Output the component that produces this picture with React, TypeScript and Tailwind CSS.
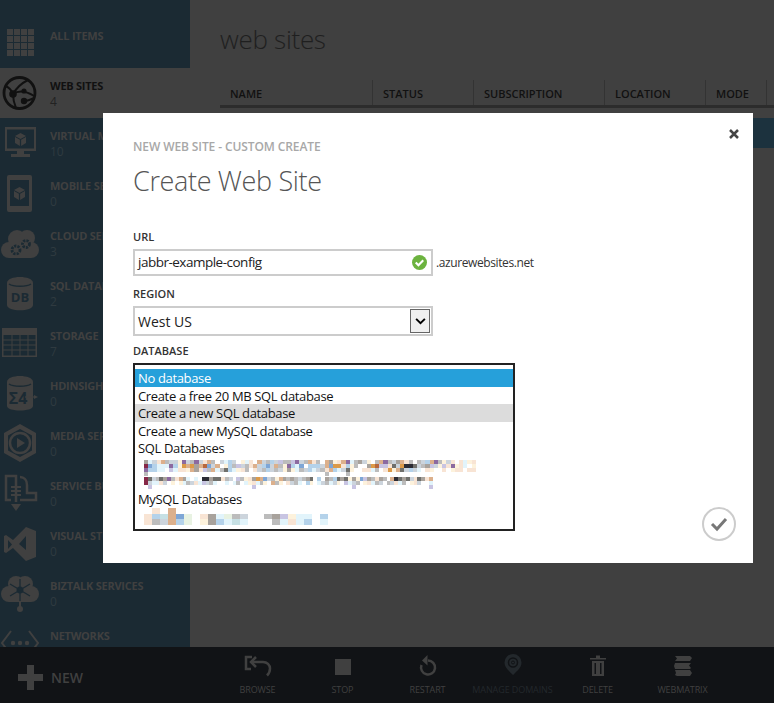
import React from "react";

const ui = { fontFamily: '"Open Sans", "Noto Sans", sans-serif' };
const BG = "#1b2a33";

const Grid = () => (
  <svg viewBox="0 0 40 40" className="w-10 h-10" fill="currentColor">
    {[0, 1, 2, 3].flatMap((r) =>
      [0, 1, 2, 3].map((c) => <rect key={`${r}${c}`} x={7 + c * 7} y={6 + r * 7} width="6" height="6" />),
    )}
  </svg>
);

const Globe = () => (
  <svg viewBox="0 0 40 40" className="w-10 h-10" fill="none" stroke="currentColor" strokeWidth="2">
    <circle cx="19.500" cy="20" r="15.500" strokeWidth="2.800" />
    <path d="M13 21C17 14 22 10 28 7M5 13c4 1 6 3 8 8M13 21c0 5 1 9 3 14M13 21c6-4 13-3 21 2M24 28c3 0 6-1 10-3" />
    <circle cx="13" cy="21" r="2.800" fill="currentColor" />
    <circle cx="24" cy="28" r="2.200" fill="currentColor" />
    <circle cx="24" cy="18" r="1.600" fill="currentColor" />
  </svg>
);

const Cube = ({ x, y }: { x: number; y: number }) => (
  <g transform={`translate(${x} ${y})`} fill="currentColor" stroke="none">
    <path d="M0 -6 5.500 -3 0 0 -5.500 -3Z" />
    <path d="M-5.500 -2 -.6 .8V7L-5.500 4Z" />
    <path d="M5.500 -2 .6 .8V7L5.500 4Z" />
  </g>
);

const Monitor = () => (
  <svg viewBox="0 0 40 40" className="w-10 h-10">
    <path d="M5 4h31v24H5zM7 6.500v19h27v-19z" fill="currentColor" fillRule="evenodd" />
    <path d="M17 28h7v3h6v3H11v-3h6z" fill="currentColor" />
    <Cube x={20.500} y={16} />
  </svg>
);

const Phone = () => (
  <svg viewBox="0 0 40 40" className="w-10 h-10">
    <path d="M9 2h21a2 2 0 0 1 2 2v33a2 2 0 0 1-2 2H9a2 2 0 0 1-2-2V4a2 2 0 0 1 2-2zM10 7v26h19V7z" fill="currentColor" fillRule="evenodd" />
    <Cube x={19.500} y={20} />
  </svg>
);

const Gear = ({ x, y, r }: { x: number; y: number; r: number }) => (
  <circle cx={x} cy={y} r={r} fill="none" stroke={BG} strokeWidth="2.800" strokeDasharray="2.200 1.100" />
);

const Cloud = () => (
  <svg viewBox="0 0 40 40" className="w-10 h-10" fill="currentColor">
    <circle cx="9" cy="27" r="8" />
    <circle cx="17" cy="16" r="9" />
    <circle cx="27" cy="15" r="8" />
    <circle cx="31" cy="27" r="8" />
    <rect x="9" y="20" width="22" height="15" />
    <Gear x={16} y={27} r={4} />
    <Gear x={26} y={21} r={3.500} />
  </svg>
);

const Db = () => (
  <svg viewBox="0 0 40 40" className="w-10 h-10">
    <path d="M7 10c0-8 26-8 26 0v22c0 7-26 7-26 0z" fill="currentColor" />
    <path d="M9 11c4 3 18 3 22 0" fill="none" stroke={BG} strokeWidth="1.500" />
    <text x="20" y="29" textAnchor="middle" fontSize="13" fontWeight="700" fill={BG} style={ui}>DB</text>
  </svg>
);

const Table = () => (
  <svg viewBox="0 0 40 40" className="w-10 h-10" fill="none" stroke="currentColor">
    <rect x="2" y="5" width="35" height="29" fill="currentColor" stroke="none" />
    <rect x="3.500" y="12" width="32" height="20.500" fill={BG} stroke="none" />
    <path d="M3 17h33M3 22h33M3 27h33M12 12v21M20 12v21M28 12v21" strokeWidth="1" />
  </svg>
);

const Hd = () => (
  <svg viewBox="0 0 40 40" className="w-10 h-10">
    <path d="M7 9c0-8 26-8 26 0v24c0 6-26 6-26 0z" fill="currentColor" />
    <path d="M9 11c4 3 18 3 22 0" fill="none" stroke={BG} strokeWidth="1.500" />
    <text x="18" y="31" textAnchor="middle" fontSize="16" fontWeight="700" fill={BG} style={ui}>Σ4</text>
    <path d="M25 24h10" stroke="currentColor" strokeWidth="1.200" />
    <path d="M34 22l4 2-4 2z" fill="currentColor" />
  </svg>
);

const Media = () => (
  <svg viewBox="0 0 40 40" className="w-10 h-10" fill="currentColor">
    <path d="M20 1 36 10v20l-16 9-16-9V10zM20 6 8 12.500v15L20 34l12-6.500v-15z" fillRule="evenodd" />
    <circle cx="20" cy="20" r="10" fill="none" stroke="currentColor" strokeWidth="2.500" />
    <path d="M17 15l8 5-8 5z" />
  </svg>
);

const Bus = () => (
  <svg viewBox="0 0 40 40" className="w-10 h-10" fill="none" stroke="currentColor" strokeWidth="2.500">
    <path d="M11 27H6V3h10v26" />
    <path d="M20 4c4 0 7 3 7 8v8h9v7H20" />
    <path d="M11 14h10M11 18h10M11 22h10" strokeWidth="2" />
    <path d="M11 31h10l-5 7z" fill="currentColor" stroke="none" />
  </svg>
);

const Vs = () => (
  <svg viewBox="0 0 40 40" className="w-10 h-10" fill="currentColor">
    <path d="M26 4 36 8v26l-10 4-13-13-7 5-2-1V13l2-1 7 5zM26 13l-7 8 7 6zM8 17v9l4-4.500z" fillRule="evenodd" />
  </svg>
);

const Biz = () => (
  <svg viewBox="0 0 40 40" className="w-10 h-10" fill="currentColor">
    <circle cx="9" cy="21" r="8" />
    <circle cx="16" cy="11" r="8" />
    <circle cx="25" cy="11" r="8" />
    <circle cx="31" cy="21" r="8" />
    <rect x="9" y="14" width="22" height="15" />
    <circle cx="20" cy="17" r="3.500" fill={BG} />
    <path d="M20 6v22M10 11l20 12M30 11 10 23" stroke={BG} strokeWidth="1.300" />
    <path d="M20 28v7" stroke="currentColor" strokeWidth="2" />
    <circle cx="20" cy="36" r="3" />
  </svg>
);

const Net = () => (
  <svg viewBox="0 0 40 40" className="w-10 h-10" fill="currentColor">
    <path d="M11 8 2 20l9 12M29 8l9 12-9 12" fill="none" stroke="currentColor" strokeWidth="2" />
    <circle cx="13" cy="20" r="2.200" />
    <circle cx="20" cy="20" r="2.200" />
    <circle cx="27" cy="20" r="2.200" />
  </svg>
);

const nav = [
  { title: "ALL ITEMS", icon: <Grid /> },
  { title: "WEB SITES", count: "4", icon: <Globe />, active: true },
  { title: "VIRTUAL MACHINES", count: "10", icon: <Monitor /> },
  { title: "MOBILE SERVICES", count: "0", icon: <Phone /> },
  { title: "CLOUD SERVICES", count: "3", icon: <Cloud /> },
  { title: "SQL DATABASES", count: "2", icon: <Db /> },
  { title: "STORAGE", count: "7", icon: <Table /> },
  { title: "HDINSIGHT", count: "0", icon: <Hd /> },
  { title: "MEDIA SERVICES", count: "0", icon: <Media /> },
  { title: "SERVICE BUS", count: "0", icon: <Bus /> },
  { title: "VISUAL STUDIO ONLINE", count: "0", icon: <Vs /> },
  { title: "BIZTALK SERVICES", count: "0", icon: <Biz /> },
  { title: "NETWORKS", count: "", icon: <Net /> },
];

const columns = [
  { name: "NAME", width: "w-[153px]" },
  { name: "STATUS", width: "w-[101px]" },
  { name: "SUBSCRIPTION", width: "w-[131px]" },
  { name: "LOCATION", width: "w-[101px]" },
  { name: "MODE", width: "w-[61px]" },
];

const actions = [
  {
    label: "BROWSE",
    icon: (
      <svg viewBox="0 0 28 28" className="w-7 h-7" fill="none" stroke="currentColor" strokeWidth="2.500">
        <path d="M8 4H2v12h5" />
        <path d="M12 4 7 9l5 5" />
        <path d="M8 9h11c4 0 7 3 7 6.500 0 3-1 5-3 7" />
      </svg>
    ),
  },
  {
    label: "STOP",
    icon: (
      <svg viewBox="0 0 28 28" className="w-7 h-7" fill="currentColor">
        <rect x="6" y="6" width="16" height="16" />
      </svg>
    ),
  },
  {
    label: "RESTART",
    icon: (
      <svg viewBox="0 0 28 28" className="w-7 h-7" fill="none" stroke="currentColor" strokeWidth="2.500">
        <path d="M14 7.500a7 7 0 1 1-6.500 4.500" />
        <path d="M13.500 2 8 7.500l5.500 5z" fill="currentColor" stroke="none" />
      </svg>
    ),
  },
  {
    label: "MANAGE DOMAINS",
    dim: true,
    icon: (
      <svg viewBox="0 0 28 28" className="w-7 h-7" fill="currentColor">
        <path d="M14 1a8.500 8.500 0 0 1 8.500 8.500c0 5-4 8-8.500 12.500C9.500 17.500 5.500 14.500 5.500 9.500A8.500 8.500 0 0 1 14 1z" />
        <circle cx="14" cy="9.500" r="4.500" fill="none" stroke="#111316" strokeWidth="1.500" />
        <circle cx="14" cy="9.500" r="1.500" fill="none" stroke="#111316" strokeWidth="1" />
      </svg>
    ),
  },
  {
    label: "DELETE",
    icon: (
      <svg viewBox="0 0 28 28" className="w-7 h-7" fill="currentColor">
        <path d="M6 5h16v1.500H6zM12 2.500h4V5h-4z" />
        <path d="M8 8h12v15H8zM10.500 10v11h1.500V10zM16 10v11h1.500V10z" fillRule="evenodd" />
      </svg>
    ),
  },
  {
    label: "WEBMATRIX",
    icon: (
      <svg viewBox="0 0 28 28" className="w-7 h-7" fill="currentColor">
        <path d="M6 3h15l2 2-2 3H6l2-2.500zM22 10l-2 2.500 2 2.500-1 1H6l-1-3 1-3zM6 17h15l2 3-2 3H8l-2-1 1-2z" />
      </svg>
    ),
  },
];

// colours of the pixelated blur over the account names
const palette: Record<string, string> = {
  ".": "#ffffff",
  r: "#f8e4d4",
  t: "#dcb08c",
  o: "#dc9a48",
  u: "#b8683c",
  y: "#fdf2dc",
  b: "#b4d2ea",
  B: "#7ea6d6",
  c: "#e2f4fb",
  d: "#c6e0e4",
  e: "#e8f2e2",
  g: "#bcbcbc",
  s: "#ccd4dc",
  n: "#a8a29c",
  G: "#70706c",
  k: "#2c2c34",
  p: "#c8c4e2",
  P: "#8c6aa0",
  m: "#862848",
};

const mosaicA = [
  "ncsrtgssyPsgPsrtg.scbs.ycr.tsgbspggpPsgtrg.tnyrtPcgnsy.gtPgsntrg.gsbtPgysr.rcyr",
  "mBbcccPbyotontuBst.ybgpsgrtsbBstgyPbcB.bbbstBoorbyg..noupprGsokkGsgnpsyprPyrc.y",
  "Pbbcc.pcrrytnrpgtcgGbcyrg.rsgbsgsynycgsbcsgrtbcsGy..rrcg.roytGsbsc.ry..r.yrr.rr",
  "g..........................................g....g...............................",
];

const mosaicB = [
  "mGsgGnPgrtnc.c.kknGGrgs.pgyrnotBsgytngngsgnG.b.ngbGnGynyBpngrng.tkGnGsrGnrt.",
  "msccrs.y.ycgsrcpsgc..c.cg.cyrcgy.tgy.rsgc.by.csgcsy.pcsg.yrcgs.gsrcg.yrs..c.",
  ".p..........................p.........................p...................p..",
];

const mosaicC = [".r.t", "rbdtBe.rncegs..gnpycc.b", "rgstbe.ynbcdc...gcrcb.c"];

const Mosaic = ({ rows, w, h }: { rows: string[]; w: number; h: number }) => {
  const cols = Math.max(...rows.map((r) => r.length));
  return (
    <svg width={cols * w} height={rows.length * h} shapeRendering="crispEdges" className="block">
      {rows.map((row, y) =>
        row.split("").map((key, x) => <rect key={`${x}-${y}`} x={x * w} y={y * h} width={w} height={h} fill={palette[key]} />),
      )}
    </svg>
  );
};

const Label = ({ children }: { children: React.ReactNode }) => (
  <div className="text-[11px] leading-[14px] font-semibold text-[#333]">{children}</div>
);

const App: React.FC = () => {
  return (
    <div className="relative w-[774px] h-[703px] overflow-hidden flex flex-col bg-[#404040]" style={ui}>
      <div className="flex flex-1 min-h-0">
        <aside className="w-[190px] shrink-0 bg-[#1b2a33] pt-[18px] overflow-hidden text-[#404040]">
          {nav.map((item) => (
            <div key={item.title} className={`h-[50px] flex items-center ${item.active ? "bg-[#404040] text-[#111]" : ""}`}>
              <div className="w-[50px] shrink-0 flex justify-start">{item.icon}</div>
              <div className="flex flex-col self-start pt-[10px] whitespace-nowrap">
                <span className="text-[11px] leading-[16px] font-bold tracking-[-0.25px]">{item.title}</span>
                <span className={`text-[12px] leading-[16px] ${item.active ? "text-[#222]" : "text-[#2f3a40]"}`}>{item.count}</span>
              </div>
            </div>
          ))}
        </aside>
        <main className="flex-1 min-w-0 pl-[30px]">
          <h1 className="text-[26px] leading-[36px] font-light text-[#1f1f1f] mt-[21px] mb-[23px] tracking-[-0.3px]">web sites</h1>
          <div className="flex h-[25px] border-b-[3px] border-[#2c2c2c] box-content w-[554px]">
            {columns.map((c) => (
              <div key={c.name} className={`${c.width} pl-[10px] border-r border-[#333] text-[11px] leading-[28px] font-semibold text-[#111]`}>
                {c.name}
              </div>
            ))}
          </div>
          <div className="mt-[10px] h-[30px] bg-[#1c323e]" />
        </main>
      </div>

      <footer className="h-[56px] shrink-0 bg-[#111316] flex text-[#404040]">
        <div className="w-[215px] flex items-center pl-[18px] gap-[8px] pt-[5px]">
          <svg viewBox="0 0 25 25" className="w-[25px] h-[25px]" fill="currentColor">
            <path d="M9 0h7v9h9v7h-9v9H9v-9H0V9h9z" />
          </svg>
          <span className="text-[14px] font-semibold">NEW</span>
        </div>
        <div className="flex pt-[6px]">
          {actions.map((a) => (
            <div key={a.label} className={`w-[85px] flex flex-col items-center whitespace-nowrap ${a.dim ? "text-[#23282c]" : ""}`}>
              {a.icon}
              <span className="text-[9px] leading-[12px] mt-[3px] tracking-[-0.1px]">{a.label}</span>
            </div>
          ))}
        </div>
      </footer>

      {/* dialog */}
      <div className="absolute left-[103px] top-[113px] w-[650px] h-[450px] bg-white pl-[30px] pt-[26px]">
        <button className="absolute right-[13px] top-[15px] text-[#444]">
          <svg viewBox="0 0 12 12" className="w-3 h-3" fill="none" stroke="currentColor" strokeWidth="2.500">
            <path d="M2 2l8 8M10 2l-8 8" />
          </svg>
        </button>
        <div className="text-[12px] leading-[16px] font-semibold text-[#a8a8a8] tracking-[-0.1px]">NEW WEB SITE - CUSTOM CREATE</div>
        <h2 className="text-[27px] leading-[38px] font-light text-[#555] mt-[7px] tracking-[-0.35px]">Create Web Site</h2>

        <div className="mt-[30px]">
          <Label>URL</Label>
        </div>
        <div className="flex items-center mt-[5px]">
          <div className="relative w-[300px] h-[27px] border-2 border-[#ccc] flex items-center pl-[3px] text-[13.500px] tracking-[-0.5px] text-[#222]">
            jabbr-example-config
            <svg viewBox="0 0 14 14" className="absolute right-[4px] top-[4px] w-[15px] h-[15px]">
              <circle cx="7" cy="7" r="7" fill="#6cb33f" />
              <path d="M3.500 7l2.500 2.500 4.500-4.500" fill="none" stroke="#fff" strokeWidth="2" />
            </svg>
          </div>
          <span className="ml-[3px] text-[12px] text-[#333] tracking-[-0.4px]">.azurewebsites.net</span>
        </div>

        <div className="mt-[11px]">
          <Label>REGION</Label>
        </div>
        <div className="relative w-[300px] h-[30px] mt-[5px] border-2 border-[#ccc] flex items-center pl-[3px] text-[14px] text-[#222]">
          West US
          <div className="absolute right-[1px] top-[1px] w-[20px] h-[24px] bg-[#f0f0f0] border border-[#666] flex items-center justify-center">
            <svg viewBox="0 0 12 8" className="w-[11px] h-[7px]" fill="none" stroke="#000" strokeWidth="2.200">
              <path d="M1 1l5 5 5-5" />
            </svg>
          </div>
        </div>

        <div className="mt-[8px]">
          <Label>DATABASE</Label>
        </div>
        <div className="w-[382px] h-[168px] mt-[5px] pt-[4px] border-2 border-[#222] text-[13px] leading-[16.300px] tracking-[-0.35px] text-[#111]">
          <div className="h-[18px] pl-[3px] pt-[1px] bg-[#26a0da] text-white">No database</div>
          <div className="pl-[3px] pt-[1px]">Create a free 20 MB SQL database</div>
          <div className="pl-[3px] pt-[1px] bg-[#dcdcdc]">Create a new SQL database</div>
          <div className="pl-[3px] pt-[1px]">Create a new MySQL database</div>
          <div className="pl-[3px] pt-[1px]">SQL Databases</div>
          <div className="pl-[9px] pt-[4px]">
            <Mosaic rows={mosaicA} w={4.200} h={4} />
            <div className="mt-[1px]">
              <Mosaic rows={mosaicB} w={3.850} h={4} />
            </div>
          </div>
          <div className="pl-[3px] mt-[1px] pt-[1px]">MySQL Databases</div>
          <div className="pl-[9px] pt-[1px]">
            <Mosaic rows={mosaicC} w={8} h={5.670} />
          </div>
        </div>

        <svg viewBox="0 0 34 34" className="absolute right-[17px] bottom-[22px] w-[34px] h-[34px]" fill="none">
          <circle cx="17" cy="17" r="16" stroke="#ccc" strokeWidth="2" />
          <path d="M10 17l5 5 9-10" stroke="#777" strokeWidth="3" />
        </svg>
      </div>
    </div>
  );
};

export default App;
